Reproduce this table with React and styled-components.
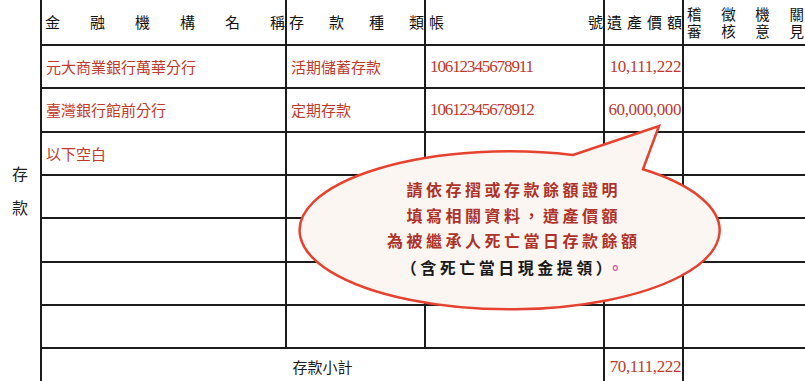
import React from "react";
import styled, { createGlobalStyle, css } from "styled-components";

const Global = createGlobalStyle`
  html, body { margin: 0; padding: 0; overflow: hidden; background: #ffffff; }
`;

const LINE = "2px solid #1c1c1c";
const CJK = `"Noto Sans CJK TC", "Noto Sans CJK SC", sans-serif`;
const NUM = `"Liberation Serif", "Noto Sans CJK TC", serif`;

const Frame = styled.div`
  position: relative;
  width: 805px;
  height: 381px;
  overflow: hidden;
  font-family: ${CJK};
  background: #fff;
`;

const Sheet = styled.div`
  display: grid;
  width: 808px;
  grid-template-columns: 42px 245px 139px 179px 79px 124px;
  grid-template-rows: 46px repeat(8, 43.33px);
`;

const SideLabel = styled.div`
  grid-column: 1;
  grid-row: 1 / -1;
  border-right: ${LINE};
  display: flex;
  flex-direction: column;
  align-items: center;
  justify-content: center;
  padding-bottom: 12px;
  font-size: 16px;
  line-height: 34px;
  color: #222;
  box-sizing: border-box;
`;

const HeadCell = styled.div`
  border-right: ${LINE};
  border-bottom: ${LINE};
  display: flex;
  flex-direction: column;
  justify-content: center;
  padding: 0 ${(p) => p.$pr ?? 0}px 0 ${(p) => p.$pl ?? 3}px;
  font-size: ${(p) => (p.$tight ? "14.5px" : "15px")};
  line-height: ${(p) => (p.$tight ? "17.5px" : "20px")};
  color: #111;
  box-sizing: border-box;
  min-width: 0;
`;

const Spread = styled.div`
  width: 100%;
  text-align: justify;
  text-align-last: justify;
  white-space: nowrap;
`;

const Cell = styled.div`
  border-right: ${LINE};
  border-bottom: ${LINE};
  display: flex;
  align-items: center;
  padding: 0 4px;
  box-sizing: border-box;
  color: #c0392b;
  font-size: 15px;
  white-space: nowrap;
  overflow: hidden;
  min-width: 0;
  ${(p) =>
    p.$num &&
    css`
      font-family: ${NUM};
      font-size: 17px;
      letter-spacing: -1.1px;
    `}
  ${(p) =>
    p.$right &&
    css`
      justify-content: flex-end;
      letter-spacing: -0.4px;
      padding: 0 1px ${p.$lift ? 6 : 0}px 0;
    `}
  ${(p) =>
    p.$span &&
    css`
      grid-column: ${p.$span};
      justify-content: center;
      color: #1a1a1a;
      padding-bottom: 6px;
    `}
`;

const Bubble = styled.svg`
  position: absolute;
  left: 0;
  top: 0;
  pointer-events: none;
`;

const Note = styled.div`
  position: absolute;
  left: 312px;
  top: 177px;
  width: 400px;
  text-align: center;
  font-family: ${CJK};
  font-weight: 700;
  font-size: 16px;
  line-height: 25.5px;
  letter-spacing: 3.5px;
  padding-left: 3.5px;
  box-sizing: border-box;
  color: #ad3229;
`;

const NoteLine = styled.div`
  color: ${(p) => (p.$dark ? "#1a1a1a" : "inherit")};
  margin-top: ${(p) => (p.$gap ? "1.5px" : "0")};
`;

const Dot = styled.span`
  color: #e0559a;
`;

const rows = [
  ["元大商業銀行萬華分行", "活期儲蓄存款", "10612345678911", "10,111,222"],
  ["臺灣銀行館前分行", "定期存款", "10612345678912", "60,000,000"],
  ["以下空白", "", "", ""],
  ["", "", "", ""],
  ["", "", "", ""],
  ["", "", "", ""],
  ["", "", "", ""],
];

export default function App() {
  return (
    <Frame>
      <Global />
      <Sheet>
        <SideLabel>
          <span>存</span>
          <span>款</span>
        </SideLabel>
        <HeadCell $pl={3}>
          <Spread>金融機構名稱</Spread>
        </HeadCell>
        <HeadCell $pl={2}>
          <Spread>存款種類</Spread>
        </HeadCell>
        <HeadCell $pl={3}>
          <Spread>帳號</Spread>
        </HeadCell>
        <HeadCell $pl={2}>
          <Spread>遺產價額</Spread>
        </HeadCell>
        <HeadCell $pl={3} $pr={2} $tight>
          <Spread>稽徵機關</Spread>
          <Spread>審核意見</Spread>
        </HeadCell>
        {rows.map((r, i) => (
          <React.Fragment key={i}>
            <Cell>{r[0]}</Cell>
            <Cell>{r[1]}</Cell>
            <Cell $num>{r[2]}</Cell>
            <Cell $num $right>
              {r[3]}
            </Cell>
            <Cell />
          </React.Fragment>
        ))}
        <Cell $span="2 / 5">存款小計</Cell>
        <Cell $num $right $lift>
          70,111,222
        </Cell>
        <Cell />
      </Sheet>
      <Bubble width="805" height="381" viewBox="0 0 805 381">
        <path
          d="M 573 155 L 659 126 L 643 169.3 A 210 79 0 1 1 573 155 Z"
          fill="#fcf6f2"
          stroke="#e5432f"
          strokeWidth="2.5"
          strokeLinejoin="miter"
        />
      </Bubble>
      <Note>
        <NoteLine>請依存摺或存款餘額證明</NoteLine>
        <NoteLine>填寫相關資料，遺產價額</NoteLine>
        <NoteLine>為被繼承人死亡當日存款餘額</NoteLine>
        <NoteLine $dark $gap>
          （含死亡當日現金提領）<Dot>。</Dot>
        </NoteLine>
      </Note>
    </Frame>
  );
}
